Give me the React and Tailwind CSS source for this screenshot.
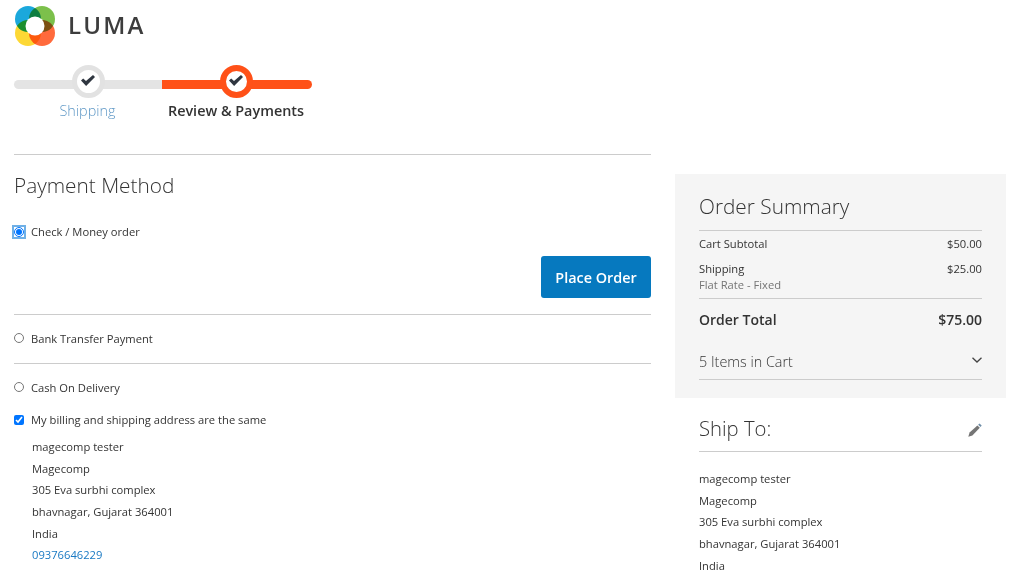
import React from 'react'

const ADDRESS = ['magecomp tester', 'Magecomp', '305 Eva surbhi complex', 'bhavnagar, Gujarat 364001', 'India']

function Logo() {
  return (
    <svg width="40" height="40" viewBox="0 0 40 40" className="block ml-[1px] mt-[2px]">
      <circle cx="13" cy="13" r="13" fill="#1ba8dc" />
      <circle cx="27" cy="13" r="13" fill="#7cc04b" style={{ mixBlendMode: 'multiply' }} />
      <circle cx="13" cy="27" r="13" fill="#fdd835" style={{ mixBlendMode: 'multiply' }} />
      <circle cx="27" cy="27" r="13" fill="#ff6a3c" style={{ mixBlendMode: 'multiply' }} />
      <circle cx="20" cy="20" r="9.5" fill="#fff" />
    </svg>
  )
}

function Check() {
  return (
    <svg width="14" height="11" viewBox="0 0 14 11" className="-mt-[2px] shrink-0">
      <path d="M0 5.4 L2.2 3.4 L5 6 L12 0 L14 2 L5.1 11 Z" fill="#2f3640" />
    </svg>
  )
}

function Step({ active }) {
  return (
    <div className={`w-[33px] h-[33px] shrink-0 -mt-[15px] rounded-full bg-white flex items-center justify-center ${active ? 'border-[6px] border-[#ff5118]' : 'border-[5.5px] border-[#e2e2e2]'}`}>
      <Check />
    </div>
  )
}

function Progress() {
  return (
    <div className="w-[298px] mt-[15px]">
      <div className="flex h-[33px] items-start pt-[15px]">
        <div className="w-[148px] h-[9px] rounded-l-full bg-[#e4e4e4] flex justify-center items-start">
          <Step />
        </div>
        <div className="w-[150px] h-[9px] rounded-r-full bg-[#ff5118] flex justify-center items-start pr-[2px]">
          <Step active />
        </div>
      </div>
      <div className="flex text-[14.4px] leading-[20px] mt-[3px]">
        <div className="w-[147px] text-center text-[#5f98c6] font-light">Shipping</div>
        <div className="w-[150px] text-center text-[#333] font-semibold">Review &amp; Payments</div>
      </div>
    </div>
  )
}

function Radio({ checked, label }) {
  return (
    <label className="flex items-center text-[11.2px] leading-[16px] text-[#333]">
      <input type="radio" readOnly checked={!!checked} name="pay" className={`w-[10px] h-[10px] mr-[7px] ${checked ? 'outline-2 outline-[#6fb0e6]' : '-mt-[2px]'}`} />
      <span>{label}</span>
    </label>
  )
}

function PaymentColumn() {
  return (
    <div className="w-[637px]">
      <div className="h-px bg-[#cccccc]" />
      <h2 className="text-[20.8px] leading-[28px] font-light text-[#333] mt-[16px]">Payment Method</h2>
      <div className="mt-[25px]">
        <Radio checked label="Check / Money order" />
        <div className="flex justify-end mt-[16px]">
          <button className="w-[110px] h-[42px] pt-[1px] bg-[#0679bf] rounded-[3px] text-white font-semibold text-[14.4px]">Place Order</button>
        </div>
      </div>
      <div className="h-px bg-[#cccccc] mt-[16px]" />
      <div className="mt-[16px]"><Radio label="Bank Transfer Payment" /></div>
      <div className="h-px bg-[#cccccc] mt-[16px]" />
      <div className="mt-[16px]"><Radio label="Cash On Delivery" /></div>
      <label className="flex items-center text-[11.2px] leading-[16px] text-[#333] mt-[16px]">
        <input type="checkbox" readOnly checked className="w-[10px] h-[10px] mr-[7px] accent-[#0075ff]" />
        <span>My billing and shipping address are the same</span>
      </label>
      <div className="mt-[8.3px] ml-[18px] text-[11.2px] leading-[21.6px] text-[#333]">
        {ADDRESS.map((line) => <div key={line}>{line}</div>)}
        <div className="text-[#1979c3]">09376646229</div>
      </div>
    </div>
  )
}

function Sidebar() {
  return (
    <div className="w-[331px] ml-[24px] mt-[20px]">
      <div className="bg-[#f5f5f5] h-[224px] px-[24px] pt-[18px]">
        <h2 className="text-[20.8px] leading-[28px] font-light text-[#333] pb-[10px] border-b border-[#cccccc]">Order Summary</h2>
        <div className="flex justify-between text-[11.2px] leading-[16px] text-[#333] mt-[5px]">
          <span>Cart Subtotal</span><span>$50.00</span>
        </div>
        <div className="flex justify-between text-[11.2px] leading-[16px] text-[#333] mt-[9px]">
          <span>Shipping</span><span>$25.00</span>
        </div>
        <div className="text-[11.2px] leading-[16px] text-[#757575] pb-[5px] border-b border-[#cccccc]">Flat Rate - Fixed</div>
        <div className="flex justify-between text-[14px] leading-[20px] font-semibold text-[#333] mt-[11px]">
          <span>Order Total</span><span>$75.00</span>
        </div>
        <div className="flex justify-between items-center mt-[22px] pb-[7px] border-b border-[#cccccc] text-[14.4px] leading-[20px] font-light text-[#333]">
          <span>5 Items in Cart</span>
          <svg width="10" height="6" viewBox="0 0 10 6" className="mb-[4px]">
            <path d="M0.5 0.8 L5 5 L9.5 0.8" fill="none" stroke="#444" strokeWidth="1.3" />
          </svg>
        </div>
      </div>
      <div className="px-[24px] mt-[16px]">
        <div className="flex justify-between items-center pb-[9px] border-b border-[#cccccc]">
          <h2 className="text-[20.3px] leading-[28px] font-light text-[#333]">Ship To:</h2>
          <svg width="14" height="14" viewBox="0 0 14 14" className="mt-[3px]">
            <path d="M0.3 13.7 L1.6 9.6 L9.4 2.4 L11.8 4.8 L4.4 12.4 Z" fill="#757575" />
            <path d="M10.1 1.7 L11.5 0.4 L13.7 2.6 L12.5 4.1 Z" fill="#6f8ea8" />
          </svg>
        </div>
        <div className="mt-[16px] text-[11.2px] leading-[21.7px] text-[#333]">
          {ADDRESS.map((line) => <div key={line}>{line}</div>)}
        </div>
      </div>
    </div>
  )
}

export default function App() {
  return (
    <div className="w-[1016px] h-[571px] overflow-hidden bg-white pl-[14px] font-['Open_Sans',sans-serif]">
      <div className="flex items-center h-[50px]">
        <Logo />
        <span className="ml-[13px] text-[24px] tracking-[2.2px] text-[#3d3d3d] font-semibold">LUMA</span>
      </div>
      <Progress />
      <div className="flex mt-[33px]">
        <PaymentColumn />
        <Sidebar />
      </div>
    </div>
  )
}
